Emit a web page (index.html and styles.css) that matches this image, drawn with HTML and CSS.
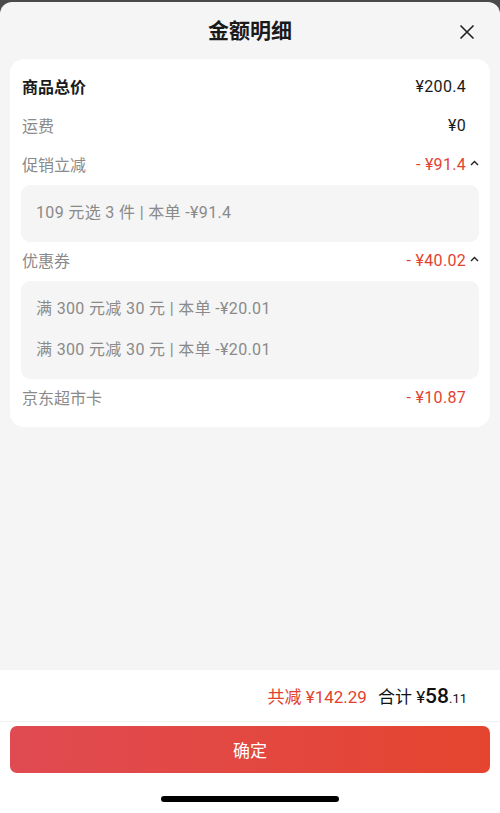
FILE: index.html
```html
<!DOCTYPE html>
<html lang="zh-CN">
<head>
    <meta charset="UTF-8">
    <title>金额明细</title>
    <link rel="stylesheet" href="styles.css">
</head>
<body>

<div class="sheet">
    <div class="head">
        <div class="title">金额明细</div>
        <svg class="close" width="16" height="16" viewBox="0 0 16 16">
            <path d="M1.5 1.5L14.5 14.5M14.5 1.5L1.5 14.5" stroke="#222" stroke-width="1.6" fill="none"/>
        </svg>
    </div>

    <div class="main">
        <div class="card">
            <div class="row strong">
                <span class="name">商品总价</span>
                <span class="val">¥200.4</span>
            </div>
            <div class="row">
                <span class="name">运费</span>
                <span class="val">¥0</span>
            </div>
            <div class="row">
                <span class="name">促销立减</span>
                <span class="val red">- ¥91.4<svg class="arrow" width="9" height="6" viewBox="0 0 9 6"><path d="M1 5L4.5 1.5L8 5" stroke="#222" stroke-width="1.4" fill="none"/></svg></span>
            </div>
            <div class="sub">
                <p>109 元选 3 件 | 本单 -¥91.4</p>
            </div>
            <div class="row">
                <span class="name">优惠券</span>
                <span class="val red">- ¥40.02<svg class="arrow" width="9" height="6" viewBox="0 0 9 6"><path d="M1 5L4.5 1.5L8 5" stroke="#222" stroke-width="1.4" fill="none"/></svg></span>
            </div>
            <div class="sub">
                <p>满 300 元减 30 元 | 本单 -¥20.01</p>
                <p>满 300 元减 30 元 | 本单 -¥20.01</p>
            </div>
            <div class="row">
                <span class="name">京东超市卡</span>
                <span class="val red">- ¥10.87</span>
            </div>
        </div>
    </div>

    <div class="foot">
        <div class="total">
            <span class="cut">共减 ¥142.29</span>
            <span class="sum">合计 ¥<b>58</b><small>.11</small></span>
        </div>
        <div class="btn-wrap">
            <div class="btn">确定</div>
        </div>
        <div class="home"><i></i></div>
    </div>
</div>

</body>
</html>
```

FILE: styles.css
```css
*{margin: 0; padding: 0; box-sizing: border-box;}
html,body{
    height: 100%;
}
body{
    background: #4a4a4a;
    font-family: Roboto, "Noto Sans CJK SC", sans-serif;
    color: #1a1a1a;
    padding-top: 2px;
}
.sheet{
    height: 811px;
    background: #f5f5f5;
    border-radius: 12px 12px 0 0;
    display: flex;
    flex-direction: column;
    overflow: hidden;
}
.head{
    height: 57px;
    display: flex;
    align-items: center;
    justify-content: center;
    position: relative;
}
.head .title{
    font-size: 21px;
    font-weight: 700;
    color: #1a1a1a;
    padding-bottom: 3px;
}
.head .close{
    position: absolute;
    right: 25px;
    top: 22px;
}
.main{
    flex: 1;
    padding: 0 10px;
}
.card{
    background: #fff;
    border-radius: 14px;
    padding: 9px 11px 9px;
}
.row{
    height: 39px;
    padding-bottom: 3px;
    display: flex;
    align-items: center;
    justify-content: space-between;
    font-size: 16px;
    color: #8a8a8a;
}
.row .name{
    padding-left: 1px;
}
.row .val{
    color: #1a1a1a;
    padding-right: 13px;
    position: relative;
    letter-spacing: 0.3px;
}
.row.strong .name{
    color: #1a1a1a;
    font-weight: 700;
}
.row .red{
    color: #e2432f;
}
.row .arrow{
    position: absolute;
    right: 0;
    top: 5px;
}
.sub{
    background: #f5f5f5;
    border-radius: 9px;
    padding: 8px 15px;
}
.sub p{
    height: 41px;
    line-height: 40px;
    font-size: 16px;
    color: #8a8a8a;
    letter-spacing: 0.35px;
}
.foot{
    background: #fff;
    height: 143px;
}
.total{
    height: 52px;
    display: flex;
    align-items: center;
    justify-content: flex-end;
    padding-right: 33px;
    border-bottom: 1px solid #f1f1f1;
    font-size: 17px;
}
.total .cut{
    color: #e2432f;
    margin-right: 11px;
}
.total .sum{
    color: #111;
}
.total .sum b{
    font-size: 21px;
    font-weight: 500;
}
.total .sum small{
    font-size: 13px;
}
.btn-wrap{
    padding: 4px 10px 0;
}
.btn{
    height: 47px;
    border-radius: 7px;
    background: linear-gradient(90deg, #e04a52, #e5452f);
    color: #fff;
    font-size: 17px;
    display: flex;
    align-items: center;
    justify-content: center;
}
.home{
    display: flex;
    justify-content: center;
    padding-top: 23px;
}
.home i{
    width: 178px;
    height: 6px;
    border-radius: 3px;
    background: #000;
}
```
